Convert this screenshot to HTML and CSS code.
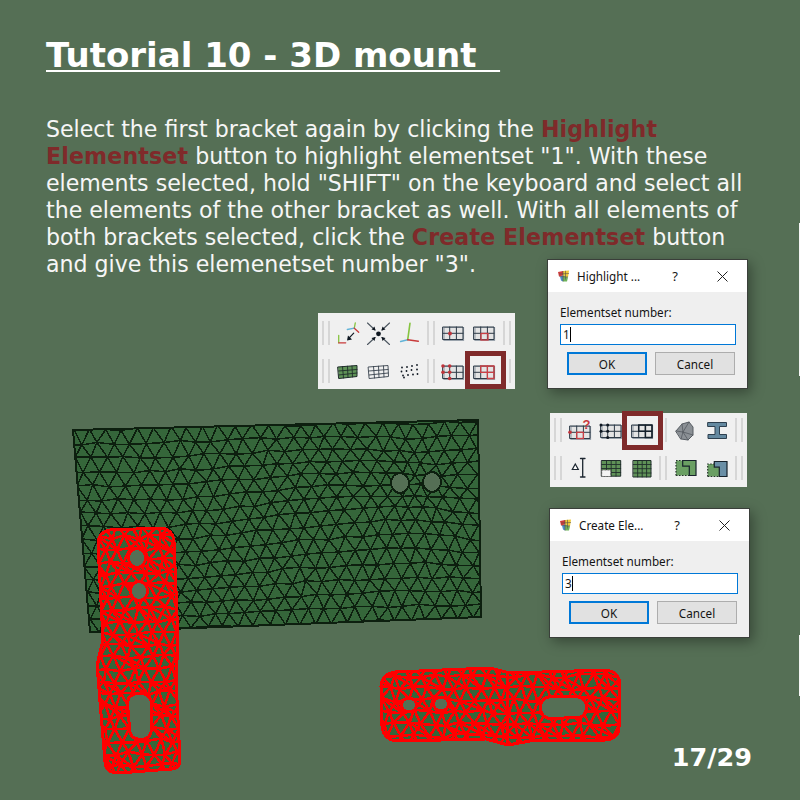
FILE: index.html
```html
<!DOCTYPE html>
<html lang="en">
<head>
<meta charset="utf-8">
<title>Tutorial 10 - 3D mount</title>
<link rel="stylesheet" href="styles.css">
</head>
<body>
<main class="slide">
  <h1 class="title">Tutorial 10 - 3D mount&nbsp;&nbsp;</h1>
  <p class="body-text">Select the first bracket again by clicking the <b class="hl">Highlight Elementset</b> button to highlight elementset "1". With these elements selected, hold "SHIFT" on the keyboard and select all the elements of the other bracket as well. With all elements of both brackets selected, click the <b class="hl">Create Elementset</b> button and give this elemenetset number "3".</p>
  <div class="page-num">17/29</div>

  <svg class="model" width="800" height="800" viewBox="0 0 800 800">
    <defs>
      <path id="panel-shape" fill-rule="evenodd" clip-rule="evenodd" d="M73 430 L478 420 L481 617 L90 632 Z M409 483 a9 10 0 1 0 -18 0 a9 10 0 1 0 18 0 Z M441 482 a9 10 0 1 0 -18 0 a9 10 0 1 0 18 0 Z"/>
      <path id="b1-shape" fill-rule="evenodd" clip-rule="evenodd" d="M110 530 L162 528 Q173 530 174 542 L178 640 L176 680 L180 760 Q180 768 172 769 L118 773 Q106 773 105 762 L97 665 L103 640 L98 545 Q98 532 110 530 Z M145.500 558 a8.500 9.500 0 1 0 -17 0 a8.500 9.500 0 1 0 17 0 Z M147.500 591 a8.500 9.500 0 1 0 -17 0 a8.500 9.500 0 1 0 17 0 Z M127.500 704 Q127.500 693.500 138 693.500 L142 693.500 Q151.500 694.500 151.500 705 L151.500 728 Q151.500 739.500 141 739.500 Q129.500 739.500 129.500 728 Z"/>
      <path id="b2-shape" fill-rule="evenodd" clip-rule="evenodd" d="M395 672 L490 668 L510 673 L606 670 Q620 672 620 686 L619 728 Q618 739 606 740 L530 741 L508 745 L486 739 L396 741 Q383 739 382 726 L381 686 Q382 674 395 672 Z M416.500 705 a7.500 7 0 1 0 -15 0 a7.500 7 0 1 0 15 0 Z M448.500 704 a7.500 7 0 1 0 -15 0 a7.500 7 0 1 0 15 0 Z M551 696.500 L576 696.500 Q586.500 697.500 586.500 707 Q586.500 717.500 576 717.500 L552 718.500 Q540.500 718.500 540.500 708 Q540.500 697.500 551 696.500 Z"/>
      <clipPath id="panel-clip"><use href="#panel-shape"/></clipPath>
      <clipPath id="b1-clip"><use href="#b1-shape"/></clipPath>
      <clipPath id="b2-clip"><use href="#b2-shape"/></clipPath>
    </defs>
    <use href="#panel-shape" class="panel-fill"/>
    <path id="panel-mesh" class="panel-mesh" clip-path="url(#panel-clip)"/>
    <use href="#panel-shape" class="panel-line"/>
    <ellipse class="hole-rim" cx="136.500" cy="559" rx="9" ry="10"/>
    <ellipse class="hole-rim" cx="138.500" cy="592" rx="9" ry="10"/>
    <ellipse class="hole-bg" cx="137.500" cy="557.500" rx="8" ry="9"/>
    <ellipse class="hole-bg" cx="139.500" cy="590.500" rx="8" ry="9"/>
    <use href="#b1-shape" class="panel-fill"/>
    <path id="b1-mesh" class="red-mesh" clip-path="url(#b1-clip)"/>
    <use href="#b1-shape" class="red-line"/>
    <use href="#b2-shape" class="panel-fill"/>
    <path id="b2-mesh" class="red-mesh" clip-path="url(#b2-clip)"/>
    <use href="#b2-shape" class="red-line"/>
    <path class="red-line" d="M507 671 L508 744"/>
  </svg>

  <!-- first toolbar -->
  <div class="toolbar tb-one">
    <div class="tb-row">
      <i class="sep"></i><i class="sep"></i>
      <svg class="ico" viewBox="0 0 31 31"><path class="g" d="M6.700 17.500V24.800"/><path class="r" d="M6.700 24.800H13.700"/><path class="k" d="M21.700 15.200L16.500 20.700"/><path class="kf" d="M15 22.500l1-5 4 4z"/><path class="g" d="M22.300 10.200L23.300 4.800"/><path class="c" d="M22.300 10.200L15.300 11.500"/><path class="r" d="M22.300 10.200L26.700 14.200"/></svg>
      <svg class="ico" viewBox="0 0 31 31"><circle class="kf" cx="15.500" cy="15.800" r="2.400"/><path class="n" d="M4.500 5L12 12M26.500 5L19 12M4.500 26.500L12 19.500M26.500 26.500L19 19.500"/><path class="kf" d="M12.500 12.500l-4-1 3-3zM18.500 12.500l1-4 3 3zM12.500 19l-4 1 3 3zM18.500 19l1 4 3-3z"/></svg>
      <svg class="ico" viewBox="0 0 31 31"><path class="g t" d="M13.700 21.800L16 5.200"/><path class="c t" d="M13.700 21.800L6.700 23.500"/><path class="r t" d="M13.700 21.800L24.300 23.200"/></svg>
      <i class="sep"></i><i class="sep"></i>
      <svg class="ico" viewBox="0 0 31 31"><use href="#grid"/><circle class="rf" cx="13" cy="15.500" r="1.900"/></svg>
      <svg class="ico" viewBox="0 0 31 31"><use href="#grid"/><rect class="rs" x="13" y="15.500" width="7" height="6.500"/></svg>
      <i class="sep"></i><i class="sep"></i>
    </div>
    <div class="tb-row">
      <i class="sep"></i><i class="sep"></i>
      <svg class="ico" viewBox="0 0 31 31"><path class="gfill" d="M6 11L25 9.500L25 20.500L7 22.500Z"/><path class="gline" d="M10.500 10.500L11.500 22M15.500 10.200L16 21.500M20 10L20.500 21M6.500 15L25 13.500M6.700 19L25 17"/></svg>
      <svg class="ico" viewBox="0 0 31 31"><path class="wire" d="M5.500 11L25 9.500L25.500 20.500L6.500 22.500Z M10.500 10.500L11.500 22M15.500 10.200L16 21.500M20.500 10L21 21M6 15L25 13.500M6.300 19L25.300 17"/></svg>
      <svg class="ico" viewBox="0 0 31 31"><g class="kf"><circle cx="8" cy="11.500" r=".9"/><circle cx="13" cy="11" r=".9"/><circle cx="18" cy="10" r=".9"/><circle cx="23" cy="9" r=".9"/><circle cx="7.500" cy="15.500" r=".9"/><circle cx="12.500" cy="15" r=".9"/><circle cx="17.500" cy="14" r=".9"/><circle cx="23" cy="13.500" r=".9"/><circle cx="9" cy="19.500" r=".9"/><circle cx="14" cy="19" r=".9"/><circle cx="19" cy="18.500" r=".9"/><circle cx="23.500" cy="18" r=".9"/><circle cx="10" cy="21.500" r=".9"/></g></svg>
      <i class="sep"></i><i class="sep"></i>
      <svg class="ico" viewBox="0 0 31 31"><use href="#grid" y="1"/><g class="rf"><circle cx="6" cy="10" r="1.800"/><circle cx="12.700" cy="10" r="1.800"/><circle cx="6" cy="16.300" r="1.800"/><circle cx="12.700" cy="16.300" r="1.800"/><circle cx="12.700" cy="22.500" r="1.800"/></g></svg>
      <svg class="ico" viewBox="0 0 31 31"><use href="#grid" y="1"/><path class="rs" d="M12.700 10H26V22.500H19.400V10M12.700 10V16.300H26"/></svg>
      <i class="sep"></i><i class="sep"></i>
    </div>
  </div>
  <div class="focus-box fb-one"></div>

  <!-- second toolbar -->
  <div class="toolbar tb-two">
    <div class="tb-row">
      <i class="sep"></i><i class="sep"></i>
      <svg class="ico" viewBox="0 0 31 31"><use href="#grid" y="2"/><circle class="rf" cx="6" cy="17.300" r="1.800"/><rect class="rs" x="12.700" y="17.300" width="6.700" height="6.200"/><text class="qmark" x="18.500" y="14">?</text></svg>
      <svg class="ico" viewBox="0 0 31 31"><use href="#grid" y="1"/><g class="kf"><circle cx="6" cy="10" r="1.500"/><circle cx="12.700" cy="10" r="1.500"/><circle cx="6" cy="16.300" r="1.500"/><circle cx="12.700" cy="16.300" r="1.500"/><circle cx="12.700" cy="22.500" r="1.500"/></g></svg>
      <svg class="ico" viewBox="0 0 31 31"><use href="#grid" y="1"/><path class="dark-thick" d="M12.700 10H26V22.500H19.400V10M12.700 10V16.300H26"/></svg>
      <i class="sep"></i><i class="sep"></i>
      <svg class="ico" viewBox="0 0 31 31"><path class="rock" d="M7 16L13 9L20 7L24 12L24 20L19 25L12 24Z"/><path class="rock-l" d="M7 16L14 17L12 24M14 17L20 7M14 17L19 25M14 17L24 20M13 9L14 17"/></svg>
      <svg class="ico" viewBox="0 0 31 31"><path class="beam" d="M8 7.500H26.500V11.500H19.500V19.500H26.500V23.500H8V19.500H15V11.500H8Z"/></svg>
      <i class="sep"></i><i class="sep"></i>
    </div>
    <div class="tb-row">
      <i class="sep"></i><i class="sep"></i>
      <svg class="ico" viewBox="0 0 31 31"><path class="tri" d="M11.300 11L14.300 16.500H8.300Z"/><path class="ibar" d="M18.700 5.500V24M16.500 5.500H21M16.500 24H21"/></svg>
      <svg class="ico" viewBox="0 0 31 31"><path class="gfill" d="M6.700 7.500H25.700V23.200H6.700Z"/><path class="gline" d="M11.500 7.500V23.200M16.200 7.500V23.200M21 7.500V23.200M6.700 11.500H25.700M6.700 15.500H25.700M6.700 19.500H25.700"/><rect class="dashcell" x="6.700" y="17" width="9" height="6.500"/></svg>
      <svg class="ico" viewBox="0 0 31 31"><path class="gfill" d="M7.300 7.500H25V24H7.300Z"/><path class="gline" d="M11.700 7.500V24M16.200 7.500V24M20.600 7.500V24M7.300 11.500H25M7.300 15.700H25M7.300 20H25"/></svg>
      <i class="sep"></i><i class="sep"></i>
      <svg class="ico" viewBox="0 0 31 31"><path class="lgreen" d="M7 7.500H27V22.500H7Z"/><path class="dots" d="M7 22.500V7.500H13.700"/><path class="dots" d="M7 22.500H20.300"/><path class="solid" d="M13.700 7.500H27V22.500H20.300V13.200H13.700Z"/></svg>
      <svg class="ico" viewBox="0 0 31 31"><path class="lblue" d="M14.300 8.500H27V23.500H19.300V14.200H14.300Z"/><path class="lgreen" d="M7.700 11H14.300V14.200H19.300V23.500H7.700Z"/><path class="dots" d="M7.700 23.500V11H14.300M7.700 23.500H19.300"/><path class="solid" d="M14.300 8.500H27V23.500H19.300V14.200H14.300Z"/></svg>
      <i class="sep"></i><i class="sep"></i>
    </div>
  </div>
  <div class="focus-box fb-two"></div>

  <!-- dialogs -->
  <section class="dialog dlg-one">
    <header class="dlg-head">
      <svg class="app-ico" viewBox="0 0 12 12"><use href="#appicon"/></svg>
      <span class="dlg-title">Highlight ...</span>
      <span class="dlg-help">?</span>
      <svg class="dlg-x" viewBox="0 0 11 11"><path d="M.5.500L10.500 10.500M10.500.500L.5 10.500"/></svg>
    </header>
    <div class="dlg-body">
      <label class="dlg-label">Elementset number:</label>
      <div class="dlg-input">1<i class="caret"></i></div>
      <div class="dlg-btns"><span class="btn btn-ok">OK</span><span class="btn">Cancel</span></div>
    </div>
  </section>
  <section class="dialog dlg-two">
    <header class="dlg-head">
      <svg class="app-ico" viewBox="0 0 12 12"><use href="#appicon"/></svg>
      <span class="dlg-title">Create Ele...</span>
      <span class="dlg-help">?</span>
      <svg class="dlg-x" viewBox="0 0 11 11"><path d="M.5.500L10.500 10.500M10.500.500L.5 10.500"/></svg>
    </header>
    <div class="dlg-body">
      <label class="dlg-label">Elementset number:</label>
      <div class="dlg-input">3<i class="caret"></i></div>
      <div class="dlg-btns"><span class="btn btn-ok">OK</span><span class="btn">Cancel</span></div>
    </div>
  </section>

  <i class="edge edge-a"></i>
  <i class="edge edge-b"></i>

  <svg class="defs-only" width="0" height="0">
    <defs>
      <g id="grid">
        <path class="grid-shadow" d="M7 9.500H26.500V22.500H7Z"/>
        <path class="grid-line" d="M6 9H26V21.500H6ZM12.700 9V21.500M19.400 9V21.500M6 15.300H26"/>
      </g>
      <g id="appicon">
        <path fill="#d23c3c" d="M0 1.500L5 .5V5L1 6Z"/>
        <path fill="#f0c93a" d="M5 .5L11 0L10 7L5 5Z"/>
        <path fill="#6fb35a" d="M5 5L10 7L9 11H5Z"/>
        <path fill="#4f8fc9" d="M2 6L5 5V11L3 10Z"/>
        <path stroke="#55504a" stroke-width=".6" fill="none" d="M5 .5V11M7.500.3V9M1 3.500L11 3M1.500 6L10 6.500"/>
      </g>
    </defs>
  </svg>
</main>
<script src="mesh.js"></script>
</body>
</html>
```
FILE: styles.css
```css
* { box-sizing: border-box; }
html, body { margin: 0; padding: 0; }
body { background: #556f55; }
.slide {
  position: relative;
  width: 800px;
  height: 800px;
  overflow: hidden;
  background: #556f55;
  padding: 35px 46px 28px;
  display: flex;
  flex-direction: column;
  font-family: "DejaVu Sans", sans-serif;
  color: #fff;
}
.title {
  margin: 0;
  font-size: 34px;
  line-height: 40px;
  font-weight: 700;
  text-decoration: underline;
  text-decoration-thickness: 2px;
  text-underline-offset: 3px;
  white-space: pre;
}
.body-text {
  margin: 41px 0 0;
  width: 710px;
  font-size: 22.1px;
  line-height: 27px;
  color: #f6f6f6;
}
.hl { color: #7f2a2a; font-weight: 700; letter-spacing: .15px; }
.page-num {
  margin-top: auto;
  align-self: flex-end;
  font-size: 25.5px;
  line-height: 30px;
  font-weight: 700;
  padding-right: 2px;
}

/* model */
.model { position: absolute; left: 0; top: 0; }
.panel-fill { fill: #35663a; }
.panel-mesh { fill: none; stroke: #0d1f0f; stroke-width: 1.5; shape-rendering: crispEdges; }
.panel-line { fill: none; stroke: #0d1f0f; stroke-width: 2; shape-rendering: crispEdges; }
.red-mesh { fill: none; stroke: #ff0000; stroke-width: 2.6; shape-rendering: crispEdges; }
.red-line { fill: none; stroke: #ff0000; stroke-width: 3; shape-rendering: crispEdges; }
.hole-rim { fill: #0d1f0f; }
.hole-bg { fill: #556f55; }

/* toolbars */
.toolbar {
  position: absolute;
  width: 197px;
  background: #f0f0f0;
  display: flex;
  flex-direction: column;
  gap: 4px;
  padding-left: 2px;
}
.tb-one { left: 318px; top: 313px; height: 76px; padding-top: 3px; }
.tb-two { left: 550px; top: 413px; height: 74px; }
.tb-row { display: flex; align-items: center; height: 34px; }
.sep { display: block; width: 2px; height: 24px; margin: 0 2px; background: #d6d6d6; flex: none; }
.sep:nth-last-child(2) { margin-left: 4px; }
.ico { width: 31px; height: 31px; flex: none; fill: none; stroke-linecap: round; }
.g { stroke: #86c440; stroke-width: 1.3; }
.r { stroke: #c83a3a; stroke-width: 1.3; }
.c { stroke: #62b4d8; stroke-width: 1.3; }
.t { stroke-width: 1.6; }
.k { stroke: #111a24; stroke-width: 1.2; }
.n { stroke: #4c5660; stroke-width: 1.1; }
.kf { fill: #0e1620; }
.rf { fill: #c0333a; }
.rs { fill: none; stroke: #cc3f45; stroke-width: 1.3; }
.grid-shadow { fill: #e4e4e4; stroke: #9aa3ac; stroke-width: 1.2; }
.grid-line { fill: none; stroke: #2d3a47; stroke-width: 1; }
.gfill { fill: #5f9257; stroke: #1f2c2a; stroke-width: 1; }
.gline { fill: none; stroke: #1f2f2a; stroke-width: .9; }
.wire { fill: none; stroke: #39434e; stroke-width: .9; }
.qmark { fill: #c8373c; stroke: none; font-family: "Liberation Sans", sans-serif; font-size: 13px; font-weight: 700; }
.dark-thick { fill: none; stroke: #15202b; stroke-width: 1.5; }
.rock { fill: #8b9095; stroke: #565c62; stroke-width: 1; }
.rock-l { fill: none; stroke: #555b61; stroke-width: .8; }
.beam { fill: #6489a0; stroke: #2d3f4e; stroke-width: 1; }
.tri { fill: #fff; stroke: #1c2630; stroke-width: 1.2; }
.ibar { fill: none; stroke: #1c2630; stroke-width: 1.3; }
.dashcell { fill: #f4f4f4; stroke: #555; stroke-width: .8; stroke-dasharray: 1.5 1.5; }
.lgreen { fill: #6a9f63; }
.lblue { fill: #6a8fa6; }
.dots { fill: none; stroke: #26332c; stroke-width: 1.2; stroke-dasharray: 1.5 1.5; stroke-linecap: butt; }
.solid { fill: none; stroke: #17222b; stroke-width: 1.2; }

.focus-box { position: absolute; width: 41px; border: 5px solid #7f2a2a; }
.fb-one { left: 465px; top: 351px; height: 38px; }
.fb-two { left: 622px; top: 411px; height: 39px; }

/* dialogs */
.dialog {
  position: absolute;
  width: 201px;
  background: #efefef;
  border: 1px solid #3a3f3a;
  box-shadow: 3px 4px 12px rgba(0, 0, 0, .35);
  display: flex;
  flex-direction: column;
  font-family: "Noto Sans", sans-serif;
  font-size: 11.7px;
  color: #141414;
}
.dlg-one { left: 547px; top: 259px; height: 130px; }
.dlg-two { left: 549px; top: 508px; height: 130px; }
.dlg-head {
  height: 32px;
  background: #fff;
  display: flex;
  align-items: center;
  padding: 0 19px 0 10px;
}
.app-ico { width: 12px; height: 13px; flex: none; }
.dlg-title { margin-left: 7px; width: 85px; white-space: nowrap; }
.dlg-help { margin-left: auto; margin-right: 39px; font-size: 13px; }
.dlg-x { width: 11px; height: 11px; flex: none; fill: none; stroke: #222; stroke-width: 1; }
.dlg-body { flex: 1; padding: 10px 12px 0; display: flex; flex-direction: column; }
.dlg-label { line-height: 20px; height: 22px; }
.dlg-input {
  width: 176px;
  height: 21px;
  background: #fff;
  border: 1px solid #0078d7;
  padding-left: 2px;
  line-height: 19px;
  display: flex;
  align-items: center;
}
.caret { display: block; width: 1px; height: 15px; background: #000; }
.dlg-btns { display: flex; gap: 8px; margin-top: 7px; margin-left: 7px; }
.btn {
  width: 80px;
  height: 23px;
  background: #e1e1e1;
  border: 1px solid #adadad;
  display: flex;
  align-items: center;
  justify-content: center;
}
.btn-ok { border: 2px solid #0078d7; }

.edge { position: absolute; left: 799px; width: 1px; background: #f6f6f6; }
.edge-a { top: 223px; height: 153px; }
.edge-b { top: 635px; height: 61px; }
.defs-only { position: absolute; }
```
FILE: mesh.js
```js
(function () {
  var seed = 1234567;
  function rnd() {
    seed = (seed * 1103515245 + 12345) & 0x7fffffff;
    return seed / 0x7fffffff;
  }
  function jit(a) { return (rnd() - 0.5) * 2 * a; }
  function f(n) { return n.toFixed(1); }

  // Triangulated grid over a quad, with optional attraction towards a point.
  function mesh(q, cols, rows, amp, warp, extra) {
    var pts = [], r, c;
    for (r = 0; r <= rows; r++) {
      pts[r] = [];
      var v = r / rows;
      for (c = 0; c <= cols + 1; c++) {
        var u = (c + (r % 2 ? -0.5 : 0)) / cols;
        var x = (1 - v) * ((1 - u) * q[0][0] + u * q[1][0]) + v * ((1 - u) * q[3][0] + u * q[2][0]);
        var y = (1 - v) * ((1 - u) * q[0][1] + u * q[1][1]) + v * ((1 - u) * q[3][1] + u * q[2][1]);
        if (warp) {
          var dx = warp[0] - x, dy = warp[1] - y;
          var w = warp[2] * Math.exp(-(dx * dx + dy * dy) / (warp[3] * warp[3]));
          x += dx * w; y += dy * w;
          y += warp[4] * Math.sin(u * 6.2 + 0.5) * Math.sin(v * 3.14);
        }
        pts[r][c] = [x + jit(amp), y + jit(amp)];
      }
    }
    var d = [];
    function seg(a, b) { d.push("M" + f(a[0]) + " " + f(a[1]) + "L" + f(b[0]) + " " + f(b[1])); }
    for (r = 0; r <= rows; r++) {
      for (c = 0; c <= cols + 1; c++) {
        if (c <= cols) seg(pts[r][c], pts[r][c + 1]);
        if (r < rows) {
          seg(pts[r][c], pts[r + 1][c]);
          if (r % 2 === 0 && c <= cols) seg(pts[r][c], pts[r + 1][c + 1]);
          if (r % 2 === 1 && c > 0) seg(pts[r][c], pts[r + 1][c - 1]);
          if (extra && rnd() < extra && c <= cols) seg(pts[r][c], pts[r + 1][c + 1]);
        }
      }
    }
    return d.join("");
  }

  document.getElementById("panel-mesh").setAttribute("d",
    mesh([[73, 430], [478, 420], [481, 617], [90, 632]], 25, 15, 1.5, [416, 487, 0.22, 50, 5], 0));
  document.getElementById("b1-mesh").setAttribute("d",
    mesh([[92, 526], [182, 524], [186, 776], [98, 778]], 7, 21, 2.4, null, 0.6));
  document.getElementById("b2-mesh").setAttribute("d",
    mesh([[376, 664], [624, 664], [624, 748], [376, 748]], 19, 7, 2.4, null, 0.6));
})();
```
